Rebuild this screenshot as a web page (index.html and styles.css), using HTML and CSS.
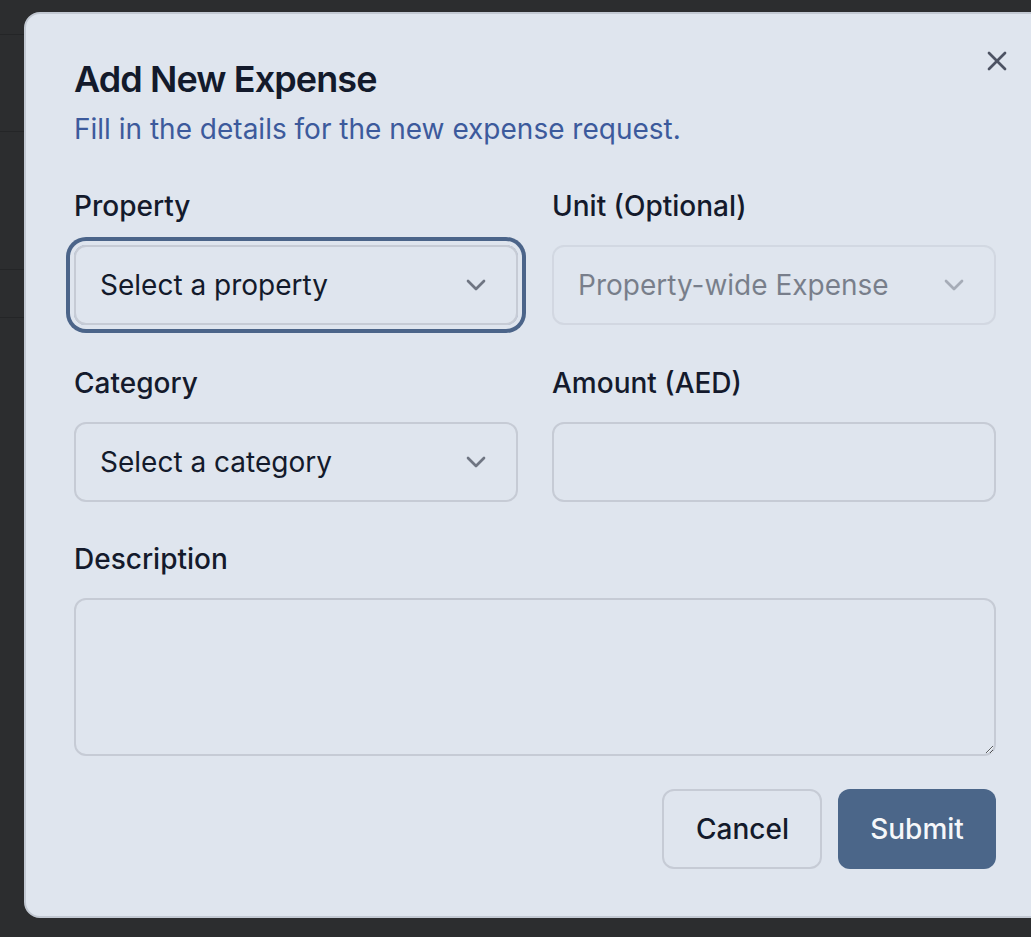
FILE: index.html
```html
<!DOCTYPE html>
<html lang="en">
<head>
<meta charset="utf-8">
<title>Add New Expense</title>
<link rel="stylesheet" href="styles.css">
</head>
<body>
<div class="page">
  <div class="band b1"></div>
  <div class="band b2"></div>
  <div class="band b3"></div>
  <div class="band b4"></div>
</div>

<div class="dialog" role="dialog" aria-labelledby="dlg-title">
  <button class="close" type="button" aria-label="Close">
    <svg viewBox="0 0 24 24" width="32" height="32" fill="none" stroke="currentColor" stroke-width="2" stroke-linecap="round" stroke-linejoin="round"><path d="M18 6 6 18"/><path d="m6 6 12 12"/></svg>
  </button>

  <div class="header">
    <h2 class="title" id="dlg-title">Add New Expense</h2>
    <p class="desc">Fill in the details for the new expense request.</p>
  </div>

  <form class="form">
    <div class="row two">
      <div class="field">
        <label class="label">Property</label>
        <button type="button" class="select focused">
          <span>Select a property</span>
          <svg class="chev" viewBox="0 0 24 24" width="32" height="32" fill="none" stroke="currentColor" stroke-width="2" stroke-linecap="round" stroke-linejoin="round"><path d="m6 9 6 6 6-6"/></svg>
        </button>
      </div>
      <div class="field">
        <label class="label">Unit (Optional)</label>
        <button type="button" class="select disabled" disabled>
          <span>Property-wide Expense</span>
          <svg class="chev" viewBox="0 0 24 24" width="32" height="32" fill="none" stroke="currentColor" stroke-width="2" stroke-linecap="round" stroke-linejoin="round"><path d="m6 9 6 6 6-6"/></svg>
        </button>
      </div>
    </div>

    <div class="row two">
      <div class="field">
        <label class="label">Category</label>
        <button type="button" class="select">
          <span>Select a category</span>
          <svg class="chev" viewBox="0 0 24 24" width="32" height="32" fill="none" stroke="currentColor" stroke-width="2" stroke-linecap="round" stroke-linejoin="round"><path d="m6 9 6 6 6-6"/></svg>
        </button>
      </div>
      <div class="field">
        <label class="label" for="amount">Amount (AED)</label>
        <input class="input" id="amount" type="text">
      </div>
    </div>

    <div class="row last">
      <div class="field">
        <label class="label" for="desc">Description</label>
        <textarea class="textarea" id="desc"></textarea>
      </div>
    </div>

    <div class="footer">
      <button type="button" class="btn outline">Cancel</button>
      <button type="submit" class="btn primary">Submit</button>
    </div>
  </form>
</div>
</body>
</html>
```
FILE: styles.css
```css
* { box-sizing: border-box; }

html, body {
  margin: 0;
  padding: 0;
  height: 100%;
  overflow: hidden;
}

body {
  background: #2c2d2f;
  font-family: Inter, "Noto Sans", sans-serif;
  position: relative;
}

.page {
  display: flex;
  flex-direction: column;
}

.band {
  border-bottom: 1px solid #242527;
}
.b1 { height: 35px; }
.b2 { height: 97px; }
.b3 { height: 138px; }
.b4 { height: 48px; }

.dialog {
  position: absolute;
  left: 24px;
  top: 12px;
  width: 1022px;
  background: #dfe5ee;
  border: 2px solid #c2c8d2;
  border-radius: 16px;
  padding: 47px 48px 47px 48px;
  color: #131a2b;
}

.close {
  position: absolute;
  top: 31px;
  right: 31px;
  width: 32px;
  height: 32px;
  padding: 0;
  border: 0;
  background: transparent;
  color: #4d5363;
  display: flex;
}

.header {
  display: flex;
  flex-direction: column;
  gap: 12px;
}

.title {
  margin: 0;
  font-size: 36px;
  line-height: 36px;
  font-weight: 600;
  letter-spacing: -0.9px;
  color: #131a2b;
}

.desc {
  margin: 0;
  font-size: 28px;
  line-height: 40px;
  color: #3c5a9c;
}

.form {
  margin-top: 43px;
  display: flex;
  flex-direction: column;
}

.row { margin-bottom: 44px; }
.row.two {
  display: grid;
  grid-template-columns: 1fr 1fr;
  column-gap: 34px;
}
.row.last { margin-bottom: 33px; margin-top: -1px; }

.field {
  display: flex;
  flex-direction: column;
  gap: 25px;
}

.label {
  font-size: 28px;
  line-height: 28px;
  font-weight: 500;
  color: #141a2c;
}

.select,
.input,
.textarea {
  font-family: inherit;
  font-size: 28px;
  background: transparent;
  border: 2px solid #c6cbd5;
  border-radius: 12px;
  color: #131a2b;
  margin: 0;
}

.select {
  height: 80px;
  width: 100%;
  display: flex;
  align-items: center;
  justify-content: space-between;
  padding: 0 24px;
  text-align: left;
  line-height: 40px;
}

.select .chev {
  color: #6f7582;
  flex: none;
}

.select.focused {
  box-shadow: 0 0 0 4px #dfe5ee, 0 0 0 8px #4b6489;
}

.select.disabled {
  opacity: 0.5;
  color: #131a2b;
}
.select.disabled span { color: #131a2b; }

.input {
  height: 80px;
  width: 100%;
  padding: 0 24px;
  outline: none;
}

.textarea {
  height: 158px;
  width: 100%;
  padding: 16px 24px;
  resize: vertical;
  outline: none;
}

.footer {
  display: flex;
  justify-content: flex-end;
  gap: 16px;
}

.btn {
  height: 80px;
  padding: 0 32px;
  border-radius: 12px;
  font-family: inherit;
  font-size: 28px;
  font-weight: 500;
  line-height: 40px;
}

.btn.outline {
  background: transparent;
  border: 2px solid #c6cbd5;
  color: #131a2b;
  width: 160px;
}

.btn.primary {
  background: #4b6689;
  border: 0;
  color: #f5f7fa;
  width: 158px;
}
```
